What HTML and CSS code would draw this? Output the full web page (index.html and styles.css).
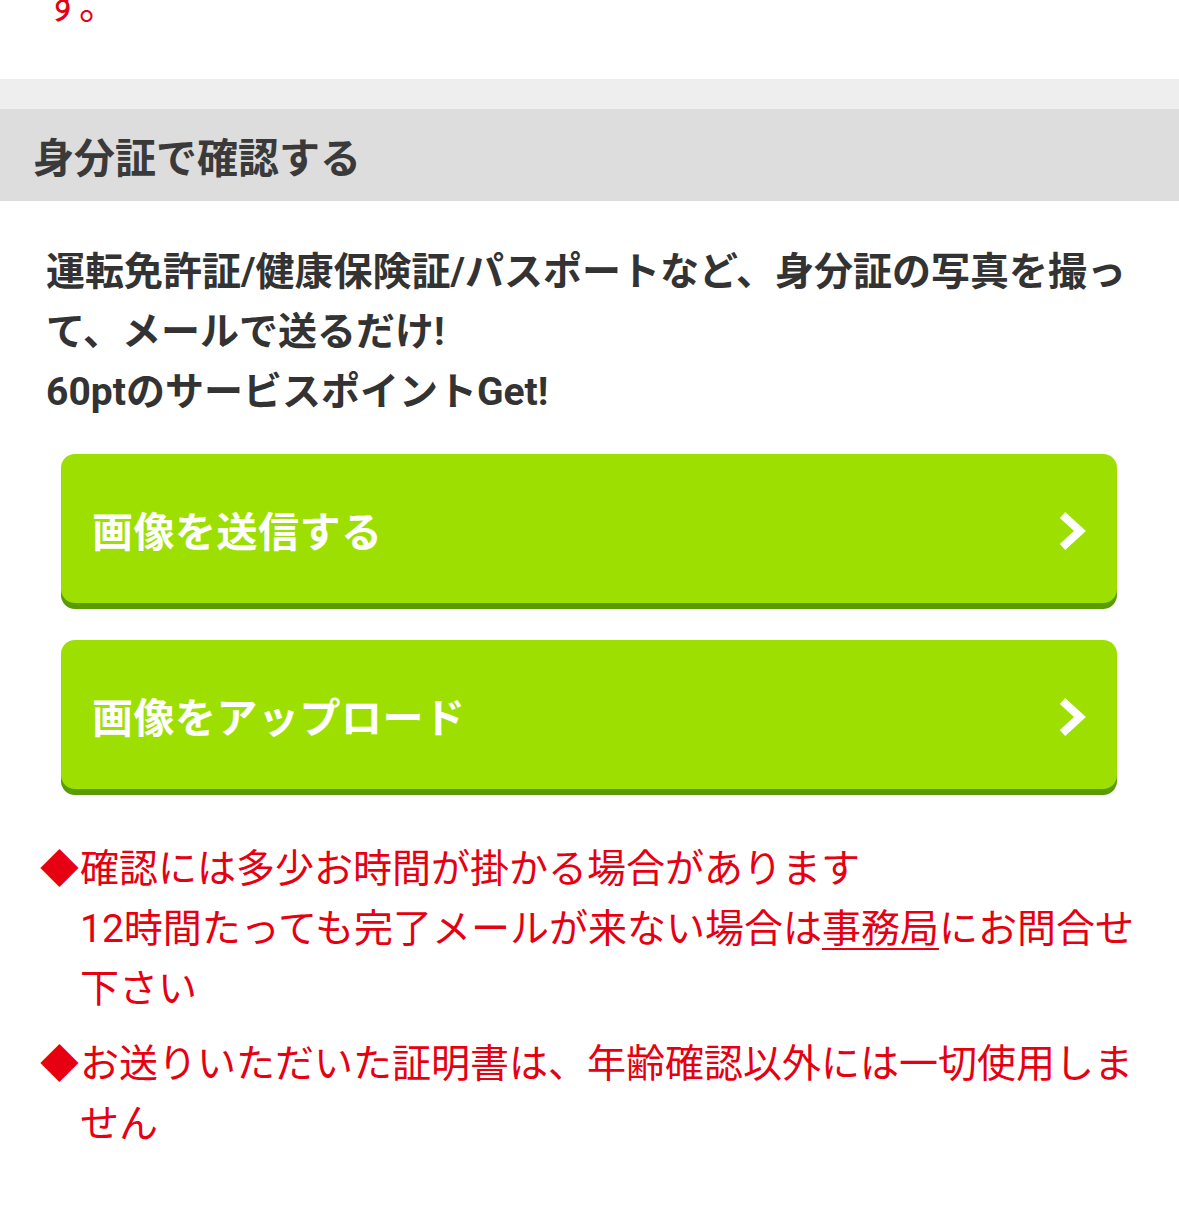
FILE: index.html
```html
<!DOCTYPE html>
<html lang="ja">
<head>
<meta charset="utf-8">
<link rel="stylesheet" href="styles.css">
</head>
<body>
<div class="prev">
  <p class="prev-line">す。</p>
</div>
<div class="band"></div>
<h2 class="heading">身分証で確認する</h2>
<p class="desc">運転免許証/健康保険証/パスポートなど、身分証の写真を撮って、メールで送るだけ!<br>60ptのサービスポイントGet!</p>
<div class="buttons">
  <a class="btn" href="#">
    <span class="btn-label">画像を送信する</span>
    <svg class="chev" width="30" height="40" viewBox="0 0 30 40"><path d="M4.5 4 L22 20 L4.5 36" fill="none" stroke="#fff" stroke-width="8" stroke-linejoin="miter" stroke-miterlimit="4"/></svg>
  </a>
  <a class="btn" href="#">
    <span class="btn-label">画像をアップロード</span>
    <svg class="chev" width="30" height="40" viewBox="0 0 30 40"><path d="M4.5 4 L22 20 L4.5 36" fill="none" stroke="#fff" stroke-width="8" stroke-linejoin="miter" stroke-miterlimit="4"/></svg>
  </a>
</div>
<div class="notes">
  <div class="note">
    <span class="mark">◆</span>
    <span class="note-text">確認には多少お時間が掛かる場合があります<br>12時間たっても完了メールが来ない場合は<a class="link" href="#">事務局</a>にお問合せ下さい</span>
  </div>
  <div class="note">
    <span class="mark">◆</span>
    <span class="note-text">お送りいただいた証明書は、年齢確認以外には一切使用しません</span>
  </div>
</div>
</body>
</html>
```

FILE: styles.css
```css
html, body {
  margin: 0;
  padding: 0;
  background: #fff;
}
body {
  font-family: Roboto, "Noto Sans CJK JP", sans-serif;
  width: 1179px;
}
.prev {
  height: 79px;
  overflow: hidden;
  padding-left: 44px;
}
.prev-line {
  margin: -24px 0 0 0;
  font-size: 39px;
  line-height: 60px;
  color: #e60012;
}
.band {
  height: 30px;
  background: #eeeeee;
}
.heading {
  margin: 0;
  height: 92px;
  background: #dddddd;
  display: flex;
  align-items: center;
  padding-left: 33px;
  font-size: 41px;
  font-weight: 700;
  color: #3a3a3a;
  box-sizing: border-box;
}
.desc {
  margin: 0;
  padding: 41px 30px 0 46px;
  font-size: 39px;
  line-height: 60px;
  font-weight: 700;
  color: #333;
}
.buttons {
  display: flex;
  flex-direction: column;
  gap: 37px;
  padding: 32px 62px 0 61px;
}
.btn {
  display: flex;
  align-items: center;
  justify-content: space-between;
  height: 149px;
  background: #9ddf00;
  border-radius: 14px;
  box-shadow: 0 6px 0 #5a9c00;
  padding: 0 29px 0 31px;
  box-sizing: border-box;
  text-decoration: none;
  color: #fff;
}
.btn-label {
  font-size: 41px;
  font-weight: 700;
  color: #fff;
  letter-spacing: 0.5px;
}
.chev {
  display: block;
  margin-top: 4px;
}
.notes {
  padding: 50px 30px 0 40px;
  display: flex;
  flex-direction: column;
  gap: 15px;
  color: #e60012;
  font-size: 39px;
  line-height: 60px;
}
.note {
  display: flex;
}
.mark {
  flex: none;
  width: 40px;
}
.note-text {
  flex: 1;
}
.link {
  color: #e60012;
  text-decoration: underline;
  text-decoration-thickness: 2px;
  text-underline-offset: 6px;
}
```
